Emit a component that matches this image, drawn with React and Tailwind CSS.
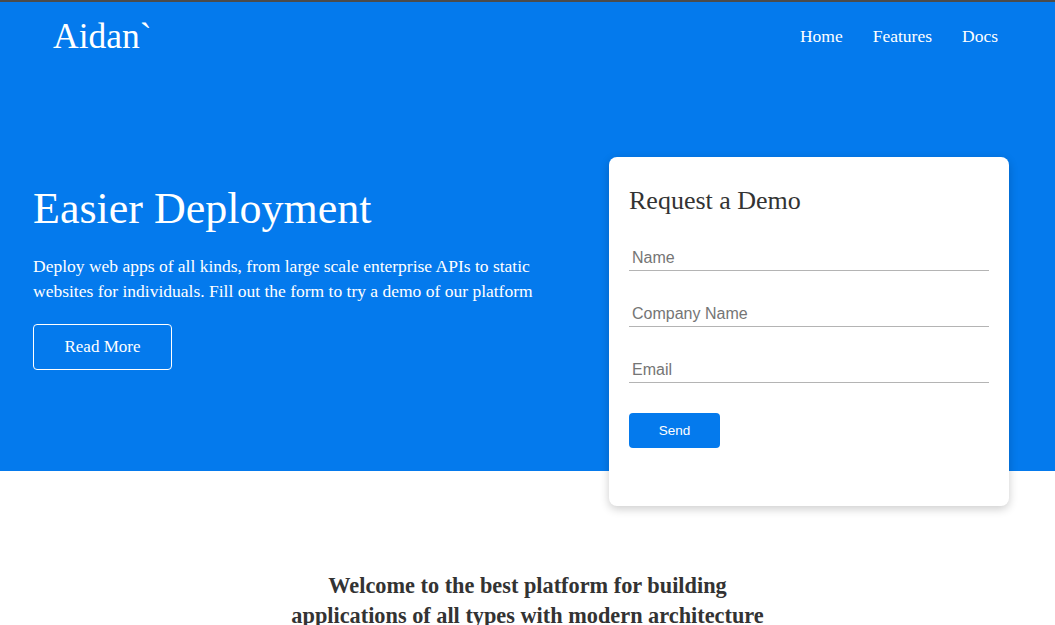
import { useState } from "react"

const navLinks = ["Home", "Features", "Docs"]

const fields = [
  { name: "name", placeholder: "Name", type: "text" },
  { name: "company", placeholder: "Company Name", type: "text" },
  { name: "email", placeholder: "Email", type: "email" },
]

const App = () => {
  const [form, setForm] = useState({ name: "", company: "", email: "" })

  return (
    <div className="min-h-screen bg-white font-['Liberation_Serif',Georgia,serif] text-[#333]">
      {/* Navbar */}
      <header className="bg-[#047aed] border-t-2 border-[#4b4b4b] text-white">
        <div className="h-[69px] flex items-center justify-between pl-[53px] pr-[57px]">
          <h1 className="text-[35.5px] leading-none">Aidan`</h1>
          <nav>
            <ul className="flex gap-[30px] text-[17.5px]">
              {navLinks.map((link) => (
                <li key={link}>
                  <a href="#" className="hover:opacity-80">
                    {link}
                  </a>
                </li>
              ))}
            </ul>
          </nav>
        </div>
      </header>

      {/* Showcase */}
      <section className="bg-[#047aed] h-[400px] text-white">
        <div className="flex justify-between pl-[33px] pr-[46px]">
          <div className="w-[530px] pt-[112px]">
            <h2 className="text-[44px] leading-[1.2] mb-[18px]">Easier Deployment</h2>
            <p className="text-[17.5px] leading-[25px] mb-[20px]">
              Deploy web apps of all kinds, from large scale enterprise APIs to static websites for individuals. Fill
              out the form to try a demo of our platform
            </p>
            <a
              href="#"
              className="inline-flex items-center justify-center w-[139px] h-[46px] border border-white rounded-[4px] text-[17px]"
            >
              Read More
            </a>
          </div>

          <div className="relative z-10 mt-[86px] w-[400px] h-[349px] bg-white rounded-[8px] shadow-[0_3px_10px_rgba(0,0,0,0.2)] p-[20px] text-[#333]">
            <h2 className="text-[26px] leading-[1.2] mt-[8px] mb-[29px]">Request a Demo</h2>
            <form onSubmit={(e) => e.preventDefault()}>
              {fields.map((field) => (
                <div key={field.name} className="mb-[30px]">
                  <input
                    type={field.type}
                    placeholder={field.placeholder}
                    value={form[field.name]}
                    onChange={(e) => setForm({ ...form, [field.name]: e.target.value })}
                    className="w-full h-[26px] px-[3px] border-b border-[#b4b4b4] text-[16px] font-['Liberation_Sans',Arial,sans-serif] placeholder:text-[#757575] focus:outline-none"
                  />
                </div>
              ))}
              <button
                type="submit"
                className="w-[91px] h-[35px] bg-[#047aed] text-white rounded-[4px] text-[13.5px] font-['Liberation_Sans',Arial,sans-serif]"
              >
                Send
              </button>
            </form>
          </div>
        </div>
      </section>

      {/* Stats heading */}
      <section className="pt-[100px] pb-[40px]">
        <h3 className="max-w-[490px] mx-auto text-center text-[22.3px] leading-[30px] font-bold">
          Welcome to the best platform for building applications of all types with modern architecture
        </h3>
      </section>
    </div>
  )
}

export default App
